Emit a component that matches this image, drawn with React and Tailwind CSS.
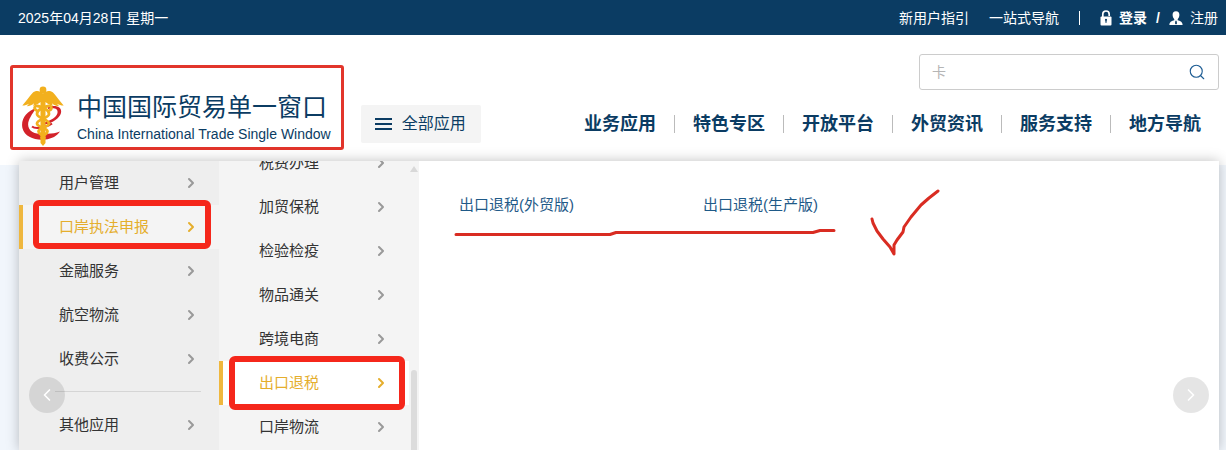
import React, { useState } from "react";
import { ChevronLeft, ChevronRight, Search } from "lucide-react";

const navLinks = ["业务应用", "特色专区", "开放平台", "外贸资讯", "服务支持", "地方导航"];

const mainMenu = ["用户管理", "口岸执法申报", "金融服务", "航空物流", "收费公示"];

const subMenu = [
  "税费办理",
  "加贸保税",
  "检验检疫",
  "物品通关",
  "跨境电商",
  "出口退税",
  "口岸物流",
];

const LockIcon = () => (
  <svg className="w-3 h-4" viewBox="0 0 12 16" aria-hidden="true">
    <path d="M2.8 7V4.2a3.2 3.2 0 0 1 6.4 0V6" fill="none" stroke="#fff" strokeWidth="1.7" />
    <rect x="0.5" y="6.5" width="11" height="9" rx="1" fill="#fff" />
    <path d="M6 8.8a1.1 1.1 0 0 1 .6 2v1.9H5.4v-1.9a1.1 1.1 0 0 1 .6-2z" fill="#0b3c63" />
  </svg>
);

const UserIcon = () => (
  <svg className="w-[14px] h-4" viewBox="0 0 14 16" aria-hidden="true">
    <path
      d="M7 1.2c2.3 0 3.5 1.6 3.4 3.9-.1 1.9-.8 3.2-1.7 4.1v1.1c2.4.7 4.8 1.3 4.9 4.7H.4c.1-3.4 2.5-4 4.9-4.7V9.2C4.4 8.3 3.7 7 3.6 5.1 3.5 2.8 4.7 1.2 7 1.2z"
      fill="#fff"
    />
    <path d="M6.4 10.8h1.2l.4 2.600L7 14.400l-1-1z" fill="#0b3c63" />
  </svg>
);

const Emblem = () => (
  <svg className="w-[42px] h-[60px] shrink-0" viewBox="0 0 42 60" aria-hidden="true">
    <path
      d="M26 21c7-2.500 14.500-.5 13 6-1.500 5.500-8 9.500-16 11.500v-2.200c6-2 11.500-5 12.500-9.300.8-4.500-4-5.500-9.500-4z"
      fill="#d3222a"
    />
    <path
      d="M14 22C5 25-1.500 33 .4 42 2.500 51 13 54.500 23 53.500c7-.7 12-3.500 15-8-4 1.600-8 2.200-12 2.200-6 .3-11 .8-15.500-1.700C4.500 42 5.500 36 8.500 31c1.500-3 3.500-5.500 5.500-9z"
      fill="#d3222a"
    />
    <path d="M10 40.500c3 2.500 8 1.500 12 .5 3-.8 6-1.800 8-3.500" fill="none" stroke="#d3222a" strokeWidth="2" />
    <path
      d="M15 24.500c-3.500-1-3-5 .5-4.500 4 .6 11.500 3.500 11.500 8 0 4.500-12 5-12 9.500 0 4 10.500 4 10.500 8 0 3-6 3.500-6 7M27 24.500c3.500-1 3-5-.5-4.500-4 .6-11.500 3.500-11.500 8 0 4.500 12 5 12 9.500 0 4-10.500 4-10.500 8 0 3 6 3.500 6 7"
      fill="none"
      stroke="#f2b01e"
      strokeWidth="2.800"
    />
    <g fill="#f2b01e">
      <circle cx="21" cy="4" r="3.400" />
      <path d="M21 7.500c-3-3-7.500-3.500-10.500-.5C7.500 10.500 4 15.500.3 19.500c2.700 0 4.700-.6 6.700-1.800-.6 1-1.300 1.700-2.300 2.600 3.300-.2 5.600-1.200 7.300-3l-.8 2.700c3-.8 5.300-2.300 7.300-4V57l2.500 3 2.500-3V16c2 1.700 4.300 3.200 7.300 4l-.8-2.700c1.700 1.800 4 2.800 7.300 3-1-.9-1.700-1.600-2.300-2.600 2 1.200 4 1.800 6.700 1.800C38 15.500 34.500 10.500 31.500 7c-3-3-7.500-2.500-10.500.5z" />
    </g>
  </svg>
);

const TopBar = () => (
  <div className="bg-[#0b3c63] text-white text-sm h-[35px] pl-[18px] pr-2 flex items-center justify-between">
    <span>2025年04月28日 星期一</span>
    <div className="flex items-center">
      <a href="#guide">新用户指引</a>
      <a href="#nav" className="ml-5">一站式导航</a>
      <span className="w-px h-[14px] bg-white mx-5" />
      <a href="#login" className="flex items-center gap-[7px] font-bold">
        <LockIcon />
        登录
      </a>
      <span className="mx-[9px] font-bold">/</span>
      <a href="#register" className="flex items-center gap-[7px]">
        <UserIcon />
        注册
      </a>
    </div>
  </div>
);

const Header = () => (
  <header className="bg-white flex justify-between pl-[22px] pr-[7px] pb-[19px] text-[#0b3c63]">
    <div className="flex items-start pt-[51px]">
      <a href="#home" className="relative flex gap-[13px]">
        <Emblem />
        <span className="flex flex-col pt-1">
          <span className="text-[25px] leading-[34px]">中国国际贸易单一窗口</span>
          <span className="text-sm leading-5">China International Trade Single Window</span>
        </span>
        <span className="absolute -left-3 -right-[13px] -top-[21px] -bottom-1 border-3 border-[#e2352b] rounded-[3px]" />
      </a>
      <button className="ml-[30px] mt-[19px] h-[38px] w-[120px] bg-[#f4f4f4] rounded-xs flex items-center gap-[10px] pl-[14px]">
        <svg className="w-[17px] h-3" viewBox="0 0 17 12" aria-hidden="true">
          <path d="M0 1h17M0 6h17M0 11h17" stroke="#0b3c63" strokeWidth="2" />
        </svg>
        全部应用
      </button>
    </div>

    <div className="flex flex-col items-end pt-[19px]">
      <label className="flex items-center w-[300px] h-9 border border-[#ccc] rounded-[3px] px-3">
        <input
          className="flex-1 min-w-0 text-sm outline-none placeholder-[#b5b5b5]"
          placeholder="卡"
          aria-label="搜索"
        />
        <Search size={18} strokeWidth={1.5} color="#1d5c93" />
      </label>
      <nav className="flex items-center mt-4 h-9 text-lg font-bold">
        {navLinks.map((name, i) => (
          <React.Fragment key={name}>
            {i > 0 && <span className="w-px h-[18px] bg-[#bbb]" />}
            <a href="#section" className="px-[18px]">{name}</a>
          </React.Fragment>
        ))}
      </nav>
    </div>
  </header>
);

const MenuItem = ({ name, active, activeBg, mark, onSelect }) => (
  <button
    onClick={() => onSelect(name)}
    className={`relative w-full h-11 flex items-center justify-between pl-9 pr-5 border-l-4 ${
      active ? `border-[#efb73e] text-[#e5ae2c] ${activeBg}` : "border-transparent text-[#333]"
    }`}
  >
    {name}
    <ChevronRight size={16} strokeWidth={3} className={active ? "text-[#e5ae2c]" : "text-[#999]"} />
    {active && <span className={`absolute border-6 border-[#f5271b] rounded-md ${mark}`} />}
  </button>
);

const App = () => {
  const [main, setMain] = useState("口岸执法申报");
  const [sub, setSub] = useState("出口退税");

  return (
    <div className="min-h-screen flex flex-col bg-[#f1f6fc] font-['Liberation_Sans','Noto_Sans_CJK_SC',sans-serif]">
      <TopBar />
      <Header />

      <main className="relative flex-1 flex -mt-1 ml-[19px] mr-[7px] bg-white text-[15px] shadow-[0_0_12px_rgba(0,0,0,0.25)]">
        <div className="w-[200px] shrink-0 bg-[#eee]">
          {mainMenu.map((name) => (
            <MenuItem
              key={name}
              name={name}
              active={name === main}
              activeBg="bg-[#f4f4f4]"
              mark="left-[10px] right-2 -top-[5px] bottom-0"
              onSelect={setMain}
            />
          ))}
          <hr className="mt-[10px] mb-[11px] ml-9 mr-[18px] border-[#d5d5d5]" />
          <MenuItem
            name="其他应用"
            active={main === "其他应用"}
            activeBg="bg-[#f4f4f4]"
            mark="left-[10px] right-2 -top-[5px] bottom-0"
            onSelect={setMain}
          />
        </div>

        <div className="w-[200px] shrink-0 bg-[#f4f4f4] flex overflow-hidden">
          <div className="flex-1 -mt-5">
            {subMenu.map((name) => (
              <MenuItem
                key={name}
                name={name}
                active={name === sub}
                activeBg="bg-white"
                mark="left-[6px] right-1 -top-[5px] -bottom-[5px]"
                onSelect={setSub}
              />
            ))}
          </div>
          <div className="w-[10px] flex flex-col items-center pt-[5px]">
            <svg className="w-2 h-[6px]" viewBox="0 0 8 6" aria-hidden="true">
              <path d="M4 0l4 6H0z" fill="#d8d8d8" />
            </svg>
            <div className="w-[6px] flex-1 mt-[198px] bg-[#dcdcdc] rounded-t-full" />
          </div>
        </div>

        <div className="relative flex-1 pt-8 pl-10 text-[#1f5a88]">
          <div className="flex leading-6">
            <a href="#trade" className="w-[244px]">出口退税(外贸版)</a>
            <a href="#production">出口退税(生产版)</a>
          </div>
          <svg
            className="absolute left-[31px] top-6 w-[500px] h-20 pointer-events-none"
            viewBox="0 0 500 80"
            fill="none"
            stroke="#d92c22"
            strokeWidth="3"
            strokeLinecap="round"
            strokeLinejoin="round"
            aria-hidden="true"
          >
            <path d="M6 49.500h154l6-2h197l7-2h14" />
            <path d="M422 34l1 4 4 8 6 8 7 8 4 7v-9l3-5 6-8 1-5 7-10 10-12 8-7 9-7" />
          </svg>
        </div>

        <button
          aria-label="上一张"
          className="absolute left-[10px] top-[216px] size-9 rounded-full bg-black/10 text-white flex items-center justify-center"
        >
          <ChevronLeft size={20} strokeWidth={2} />
        </button>
        <button
          aria-label="下一张"
          className="absolute right-[10px] top-[216px] size-9 rounded-full bg-black/10 text-white flex items-center justify-center"
        >
          <ChevronRight size={20} strokeWidth={2} />
        </button>
      </main>
    </div>
  );
};

export default App;
